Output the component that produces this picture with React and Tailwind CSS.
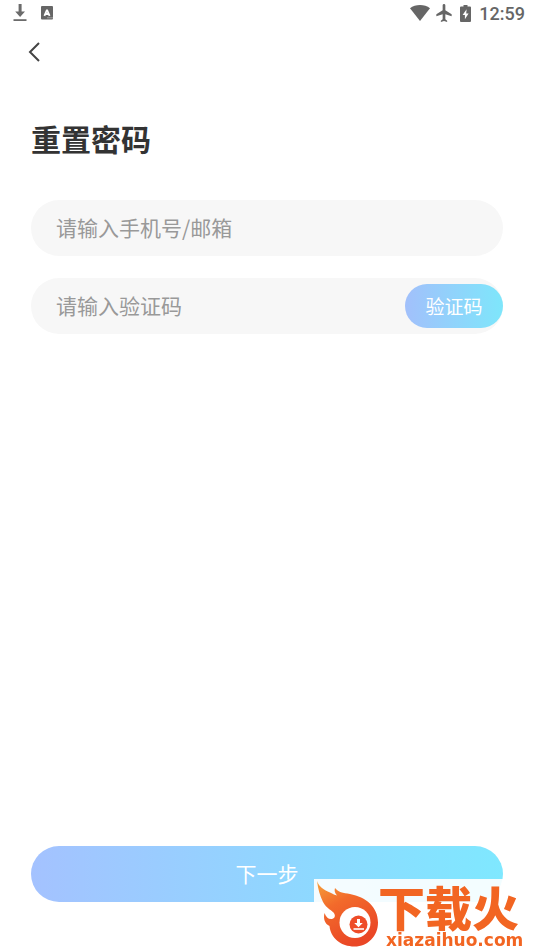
import { useState } from "react";

const DownloadIcon = () => (
  <svg className="h-[18px] w-[14px]" viewBox="0 0 14 18" fill="#6b6b6b" aria-hidden="true">
    <path d="M5.6 0h3v7.6h3.4L7.1 12.9 2.2 7.6h3.4z" />
    <path d="M0.5 15.2h13v1.8h-13z" />
  </svg>
);

const KeyboardIcon = () => (
  <svg className="h-[14px] w-3" viewBox="0 0 12 14" aria-hidden="true">
    <rect width="12" height="13.6" rx="1" fill="#666" />
    <path d="M3.4 9.8 6 3.8l2.6 6M4.5 8h3" fill="none" stroke="#fff" strokeWidth="1.8" strokeLinejoin="bevel" />
    <path d="M6.5 11.8h1M8.5 11.8h1M10.5 11.8h1" stroke="#ddd" strokeWidth="1" />
  </svg>
);

const WifiIcon = () => (
  <svg className="h-4 w-5" viewBox="0 0 20 16" fill="#666" aria-hidden="true">
    <path d="M0 3.2C2.8 1.2 6.2 0 10 0s7.2 1.2 10 3.2L10 16z" />
  </svg>
);

const PlaneIcon = () => (
  <svg className="h-[18px] w-4" viewBox="3 2 17 20" fill="#666" aria-hidden="true">
    <path d="M20 15.5v-2l-7-4.500V3.5C13 2.67 12.33 2 11.5 2S10 2.67 10 3.5V9l-7 4.5v2l7-2V19l-2 1.5V22l3.5-1 3.5 1v-1.5L13 19v-5.5z" />
  </svg>
);

const BatteryIcon = () => (
  <svg className="h-[17px] w-[11px]" viewBox="0 0 11 17" aria-hidden="true">
    <path d="M3.5 0h4v1.6H10a1 1 0 0 1 1 1V16a1 1 0 0 1-1 1H1a1 1 0 0 1-1-1V2.6a1 1 0 0 1 1-1h2.5z" fill="#666" />
    <path d="M6.6 4.2 2.6 10h2.3v4.3L8.6 8.5H6.2z" fill="#fff" />
  </svg>
);

const StatusBar = () => (
  <div className="flex h-[26px] items-end justify-between pr-[9px] pl-[13px]">
    <div className="flex h-[26px] items-center gap-[14px]">
      <DownloadIcon />
      <KeyboardIcon />
    </div>
    <div className="flex h-[26px] items-center">
      <WifiIcon />
      <span className="ml-1.5 flex"><PlaneIcon /></span>
      <span className="ml-2 flex"><BatteryIcon /></span>
      <span className="ml-2 pt-0.5 font-[Roboto,sans-serif] text-[18px] leading-6 font-medium text-[#666]">12:59</span>
    </div>
  </div>
);

const FlameLogo = () => (
  <svg className="h-[70px] w-16 shrink-0" viewBox="0 0 64 70" aria-hidden="true">
    <defs>
      <linearGradient id="flame" x1="0" y1="0" x2="0.5" y2="1">
        <stop offset="0" stopColor="#f6a13a" />
        <stop offset="0.4" stopColor="#f26a2b" />
        <stop offset="1" stopColor="#ea4726" />
      </linearGradient>
    </defs>
    <path
      d="M3 2C5 8 10 11 16 13.5c3 1.500 5 2.500 7 3C21 14 20 12 21 9c3 4 8 5 15 6C52 18 64 28 64 43.500 64 57 54 67.500 40.500 67.500 27 67.500 16.500 59 15.500 47 11 45 9 40 10.500 34c1.500 4 4 6.500 7.500 6 2.500-.5 3.500-2.500 2.500-5C18.500 31 12.500 30 9 23 6 17 4 10 3 2z"
      fill="url(#flame)"
    />
    <circle cx="41" cy="43.5" r="15.5" fill="#fff" />
    <circle cx="44.5" cy="45.5" r="9" fill="#ee4c28" />
    <path d="M43 40h3v4h2.8L44.5 48.2 40.2 44H43z" fill="#fff" />
    <path d="M39.5 50H50" stroke="#fff" strokeWidth="1.6" />
  </svg>
);

const SiteBadge = () => (
  <div className="fixed right-0 bottom-0 flex h-[71px] w-[220px] bg-white/90 text-[#f26522]">
    <FlameLogo />
    <div className="flex flex-col whitespace-nowrap">
      <span className="mt-1 font-['Noto_Sans_CJK_SC',sans-serif] text-[47px] leading-[46px] font-black">
        下载火
      </span>
      <span className="ml-2 font-['DejaVu_Sans',sans-serif] text-[17px] leading-[22px] font-bold">
        xiazaihuo.com
      </span>
    </div>
  </div>
);

const App = () => {
  const [account, setAccount] = useState("");
  const [code, setCode] = useState("");

  return (
    <div className="flex min-h-screen flex-col bg-white font-['Noto_Sans_CJK_SC',sans-serif]">
      <StatusBar />

      <header className="flex h-[52px] items-center px-7">
        <button type="button" aria-label="返回" className="flex">
          <svg className="h-5 w-3" viewBox="0 0 12 20" fill="none" stroke="#444" strokeWidth="2" aria-hidden="true">
            <path d="M11 1 2 10l9 9" />
          </svg>
        </button>
      </header>

      <form className="flex flex-1 flex-col px-[31px] pb-12" onSubmit={(e) => e.preventDefault()}>
        <h1 className="mt-10 text-[30px] leading-10 font-bold text-[#333]">重置密码</h1>

        <div className="mt-[42px] flex flex-col gap-[22px]">
          <input
            type="text"
            aria-label="手机号/邮箱"
            placeholder="请输入手机号/邮箱"
            value={account}
            onChange={(e) => setAccount(e.target.value)}
            className="h-14 w-full rounded-full bg-[#f7f7f7] px-[25px] pb-0.5 text-[21px] text-[#333] outline-none placeholder:text-[#999]"
          />
          <div className="flex h-14 items-center rounded-full bg-[#f7f7f7]">
            <input
              type="text"
              aria-label="验证码"
              placeholder="请输入验证码"
              value={code}
              onChange={(e) => setCode(e.target.value)}
              className="h-14 min-w-0 flex-1 bg-transparent pb-0.5 pl-[25px] text-[21px] text-[#333] outline-none placeholder:text-[#999]"
            />
            <button
              type="button"
              className="h-11 w-[98px] rounded-full bg-linear-to-r/srgb from-[#a2c0fb] to-[#7ee6fb] text-[19px] text-white"
            >
              验证码
            </button>
          </div>
        </div>

        <button
          type="submit"
          className="mt-auto h-14 w-full rounded-full bg-linear-to-r/srgb from-[#a4c2ff] to-[#7fe8ff] text-[21px] text-white"
        >
          下一步
        </button>
      </form>

      <SiteBadge />
    </div>
  );
};

export default App;
